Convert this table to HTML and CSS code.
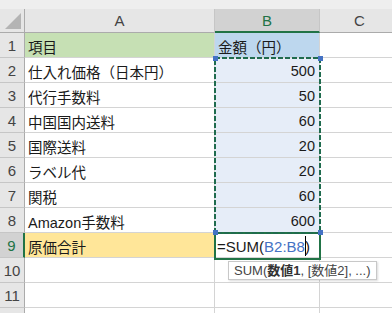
FILE: index.html
```html
<!DOCTYPE html>
<html lang="ja">
<head>
    <meta charset="UTF-8">
    <title>原価計算</title>
    <link rel="stylesheet" href="styles.css">
</head>
<body>
    <div class="sheet">
        <div class="strip"></div>

        <div class="head corner"><span class="tri"></span></div>
        <div class="head col">A</div>
        <div class="head col active">B</div>
        <div class="head col">C</div>

        <div class="rh">1</div><div class="cell green">項目</div><div class="cell blue">金額（円）</div><div class="cell"></div>
        <div class="rh">2</div><div class="cell">仕入れ価格（日本円）</div><div class="cell num ref">500</div><div class="cell"></div>
        <div class="rh">3</div><div class="cell">代行手数料</div><div class="cell num ref">50</div><div class="cell"></div>
        <div class="rh">4</div><div class="cell">中国国内送料</div><div class="cell num ref">60</div><div class="cell"></div>
        <div class="rh">5</div><div class="cell">国際送料</div><div class="cell num ref">20</div><div class="cell"></div>
        <div class="rh">6</div><div class="cell">ラベル代</div><div class="cell num ref">20</div><div class="cell"></div>
        <div class="rh">7</div><div class="cell">関税</div><div class="cell num ref">60</div><div class="cell"></div>
        <div class="rh">8</div><div class="cell">Amazon手数料</div><div class="cell num ref">600</div><div class="cell"></div>
        <div class="rh active">9</div><div class="cell yellow">原価合計</div><div class="cell edit">=SUM(<span class="refText">B2:B8</span><span class="caret"></span>)</div><div class="cell"></div>
        <div class="rh">10</div><div class="cell"></div><div class="cell"></div><div class="cell"></div>
        <div class="rh">11</div><div class="cell"></div><div class="cell"></div><div class="cell"></div>
        <div class="rh"></div><div class="cell"></div><div class="cell"></div><div class="cell"></div>

        <!-- marquee around the referenced range B2:B8 -->
        <svg class="marquee" width="108" height="178" viewBox="0 0 108 178">
            <rect x="1" y="1" width="105" height="175" fill="none" stroke="#1f6b4e" stroke-width="2" stroke-dasharray="5 2"/>
        </svg>
        <span class="handle h1"></span>
        <span class="handle h2"></span>
        <span class="handle h3"></span>
        <span class="handle h4"></span>

        <div class="cursor"></div>

        <div class="tip">SUM(<b>数値1</b>, [数値2], ...)</div>
    </div>
</body>
</html>
```

FILE: styles.css
```css
* {
    box-sizing: border-box;
}
body {
    margin: 0;
    background: #fff;
    font-family: "Liberation Sans", "Noto Sans CJK JP", sans-serif;
    font-size: 14.5px;
    color: #1a1a1a;
    overflow: hidden;
}
.sheet {
    position: relative;
    display: grid;
    grid-template-columns: 25px 190px 105px 80px;
    grid-template-rows: 9px 24px;
    grid-auto-rows: 25px;
    width: 392px;
    height: 313px;
    overflow: hidden;
}
.strip {
    grid-column: 1 / -1;
    background: #eeeeee;
}
.head {
    background: #e6e6e6;
    border-right: 1px solid #c6c6c6;
    border-bottom: 1px solid #ababab;
    display: flex;
    align-items: center;
    justify-content: center;
    color: #444;
    font-size: 15px;
}
.corner {
    position: relative;
    border-right: 1px solid #ababab;
}
.tri {
    position: absolute;
    right: 3px;
    bottom: 3px;
    width: 0;
    height: 0;
    border-left: 16px solid transparent;
    border-bottom: 16px solid #b4b4b4;
}
.head.active {
    background: #d2d2d2;
    color: #217346;
    border-bottom: 2px solid #217346;
}
.rh {
    background: #e6e6e6;
    border-right: 1px solid #ababab;
    border-bottom: 1px solid #c6c6c6;
    display: flex;
    align-items: center;
    justify-content: center;
    color: #444;
    font-size: 15px;
    padding-top: 1px;
}
.rh.active {
    background: #d2d2d2;
    color: #217346;
    border-right: 2px solid #217346;
}
.cell {
    border-right: 1px solid #d4d4d4;
    border-bottom: 1px solid #d4d4d4;
    display: flex;
    align-items: center;
    padding: 2px 3px 0;
    white-space: nowrap;
}
.num {
    justify-content: flex-end;
    padding-right: 4px;
}
.green {
    background: #c6e0b4;
}
.blue {
    background: #bdd7ee;
}
.yellow {
    background: #ffe699;
}
.ref {
    background: #e6edf8;
}
.edit {
    position: relative;
    font-size: 15px;
    padding-left: 2px;
    overflow: visible;
    z-index: 2;
}
.refText {
    color: #4472c4;
}
.caret {
    display: inline-block;
    width: 1px;
    height: 20px;
    margin-right: -1px;
    background: #000;
}
.cursor {
    position: absolute;
    left: 214px;
    top: 232px;
    width: 107px;
    height: 28px;
    border: 2px solid #217346;
    z-index: 3;
}
.marquee {
    position: absolute;
    left: 214px;
    top: 57px;
    z-index: 4;
}
.handle {
    position: absolute;
    width: 5px;
    height: 5px;
    background: #4472c4;
    z-index: 5;
}
.h1 { left: 213px; top: 56px; }
.h2 { left: 318px; top: 56px; }
.h3 { left: 213px; top: 230px; }
.h4 { left: 318px; top: 230px; }
.tip {
    position: absolute;
    left: 228px;
    top: 261px;
    height: 19px;
    padding: 0 5px;
    background: #fff;
    border: 1px solid #c8c8c8;
    box-shadow: 1px 1px 2px rgba(0, 0, 0, 0.15);
    font-size: 13px;
    line-height: 17px;
    color: #444;
    z-index: 6;
}
.tip b {
    color: #333;
}
```
